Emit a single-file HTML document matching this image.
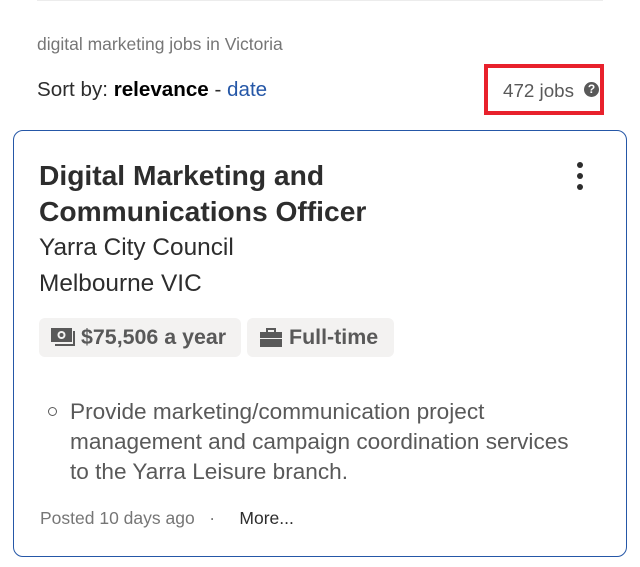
<!DOCTYPE html>
<html><head><style>
body{margin:0;width:640px;height:567px;background:#fff;font-family:"Liberation Sans",sans-serif;position:relative;overflow:hidden}
.a{position:absolute;white-space:nowrap}
</style></head><body>
<div class="a" style="left:37px;top:0;width:566px;height:1px;background:#ececec"></div>
<div class="a" style="left:37px;top:34px;font-size:17.5px;color:#767676">digital marketing jobs in Victoria</div>
<div class="a" style="left:37px;top:78px;font-size:20.6px;color:#2d2d2d">Sort by: <b style="color:#000">relevance</b> - <span style="color:#2557a7">date</span></div>
<div class="a" style="left:484px;top:64px;width:112px;height:43px;border:4px solid #e8212c"></div>
<div class="a" style="left:503px;top:80px;font-size:18.8px;color:#595959">472 jobs</div>
<div class="a" style="left:584px;top:82px;width:15px;height:15px;border-radius:50%;background:#595959;color:#fff;font-size:12px;font-weight:bold;text-align:center;line-height:15px">?</div>
<div class="a" style="left:13px;top:130px;width:612px;height:425px;border:1px solid #2557a7;border-radius:10px"></div>
<div class="a" style="left:39px;top:157px;font-size:28.2px;font-weight:bold;color:#2d2d2d;line-height:36px">Digital Marketing and<br>Communications Officer</div>
<div class="a" style="left:577px;top:162px">
<div style="width:6px;height:6px;border-radius:50%;background:#2d2d2d;margin-bottom:5px"></div>
<div style="width:6px;height:6px;border-radius:50%;background:#2d2d2d;margin-bottom:5px"></div>
<div style="width:6px;height:6px;border-radius:50%;background:#2d2d2d"></div></div>
<div class="a" style="left:39px;top:230px;font-size:24.4px;color:#2d2d2d;line-height:36px">Yarra City Council<br>Melbourne VIC</div>
<div class="a" style="left:39px;top:318px;width:202px;height:39px;background:#f3f2f1;border-radius:6px"></div>
<svg class="a" style="left:51px;top:328px" width="26" height="20" viewBox="0 0 26 20"><rect x="0" y="0" width="21" height="14" fill="#595959"/><circle cx="10.5" cy="7" r="4" fill="#f3f2f1"/><circle cx="10.5" cy="7" r="2" fill="#595959"/><path d="M23 3v14H4" stroke="#595959" stroke-width="2" fill="none"/></svg>
<div class="a" style="left:81px;top:325px;font-size:21.4px;font-weight:bold;color:#595959">$75,506 a year</div>
<div class="a" style="left:247px;top:318px;width:147px;height:39px;background:#f3f2f1;border-radius:6px"></div>
<svg class="a" style="left:260px;top:328px" width="22" height="19" viewBox="0 0 22 19"><path d="M7 4V1h8v3" stroke="#595959" stroke-width="2" fill="none"/><rect x="0" y="4" width="22" height="6" fill="#595959"/><rect x="0" y="11" width="22" height="8" fill="#595959"/></svg>
<div class="a" style="left:289px;top:325px;font-size:21.4px;font-weight:bold;color:#595959">Full-time</div>
<div class="a" style="left:48px;top:407px;width:7px;height:7px;border:1.5px solid #595959;border-radius:50%"></div>
<div class="a" style="left:70px;top:397px;font-size:22.6px;color:#595959;line-height:30px">Provide marketing/communication project<br>management and campaign coordination services<br>to the Yarra Leisure branch.</div>
<div class="a" style="left:40px;top:508px;font-size:17.5px;color:#767676">Posted 10 days ago &nbsp;&nbsp;·&nbsp;&nbsp;&nbsp;&nbsp; <span style="color:#2d2d2d">More...</span></div>
</body></html>
